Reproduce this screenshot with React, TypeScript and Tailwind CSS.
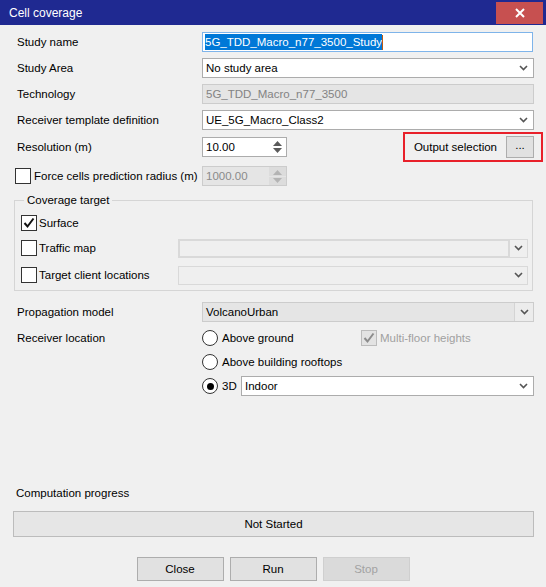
import type { ReactNode } from 'react';

function Chevron({ color = '#555555' }: { color?: string }) {
  return (
    <svg width="9" height="6" viewBox="0 0 9 6">
      <path d="M1 1 L4.5 4.5 L8 1" fill="none" stroke={color} strokeWidth="1.6" />
    </svg>
  );
}

function Check({ color = '#111111' }: { color?: string }) {
  return (
    <svg width="14" height="14" viewBox="0 0 14 14">
      <path d="M2.5 7 L5.5 10.5 L11.5 2.5" fill="none" stroke={color} strokeWidth="2" />
    </svg>
  );
}

function Checkbox({ checked = false, disabled = false }: { checked?: boolean; disabled?: boolean }) {
  return (
    <div
      className={`w-[16px] h-[16px] shrink-0 border flex items-center justify-center ${
        disabled ? 'border-[#bcbcbc] bg-[#e3e3e3]' : 'border-[#333333] bg-white'
      }`}
    >
      {checked && <Check color={disabled ? '#8c8c8c' : '#111111'} />}
    </div>
  );
}

function Radio({ checked = false }: { checked?: boolean }) {
  return (
    <div className="w-[16px] h-[16px] shrink-0 rounded-full border border-[#333333] bg-white flex items-center justify-center">
      {checked && <div className="w-[7px] h-[7px] rounded-full bg-black" />}
    </div>
  );
}

function Combo({ value = '', disabled = false, split = false }: { value?: string; disabled?: boolean; split?: boolean }) {
  if (disabled) {
    return (
      <div className="flex-1 h-[20px] flex border border-[#cccccc] bg-[#e5e5e5]">
        <div className="flex-1 flex items-center pl-[3px] text-black">{value}</div>
        {split ? (
          <div className="w-[19px] border-l border-[#d4d4d4] flex items-center justify-center bg-[#ececec]">
            <Chevron />
          </div>
        ) : (
          <div className="w-[19px] flex items-center justify-center">
            <Chevron />
          </div>
        )}
      </div>
    );
  }
  return (
    <div className="flex-1 h-[20px] flex items-center border border-[#acacac] bg-white">
      <div className="flex-1 pl-[3px]">{value}</div>
      <div className="w-[19px] flex items-center justify-center">
        <Chevron />
      </div>
    </div>
  );
}

function EmptyCombo({ thick = false }: { thick?: boolean }) {
  return (
    <div className="w-[350px] h-[19px] flex border border-[#d9d9d9] bg-[#efefef]">
      <div className={`flex-1 ${thick ? 'border-2 border-[#d9d9d9] -m-px' : ''}`} />
      <div className={`w-[18px] flex items-center justify-center ${thick ? 'border-l border-[#d9d9d9]' : ''}`}>
        <Chevron />
      </div>
    </div>
  );
}

function Spin({ value, disabled = false }: { value: string; disabled?: boolean }) {
  const arrow = disabled ? '#b4b4b4' : '#5a5a5a';
  return (
    <div
      className={`w-[85px] h-[20px] flex border ${
        disabled ? 'border-[#cccccc] bg-[#e5e5e5] text-[#8a8a8a]' : 'border-[#acacac] bg-white text-black'
      }`}
    >
      <div className="flex-1 flex items-center pl-[3px]">{value}</div>
      <div className={`w-[17px] flex flex-col ${disabled ? 'gap-px bg-[#e5e5e5]' : ''}`}>
        <div className={`flex-1 flex items-end justify-center pb-[1px] ${disabled ? 'bg-[#dcdcdc]' : ''}`}>
          <svg width="9" height="5" viewBox="0 0 9 5">
            <path d="M0 5 L4.5 0 L9 5 Z" fill={arrow} />
          </svg>
        </div>
        <div className={`flex-1 flex items-start justify-center pt-[1px] ${disabled ? 'bg-[#dcdcdc]' : ''}`}>
          <svg width="9" height="5" viewBox="0 0 9 5">
            <path d="M0 0 L4.5 5 L9 0 Z" fill={arrow} />
          </svg>
        </div>
      </div>
    </div>
  );
}

function Row({ label, children }: { label: string; children: ReactNode }) {
  return (
    <div className="flex items-center h-[20px]">
      <div className="w-[185px] shrink-0">{label}</div>
      {children}
    </div>
  );
}

function Button({ label, disabled = false }: { label: string; disabled?: boolean }) {
  return (
    <div
      className={`w-[87px] h-[24px] flex items-center justify-center border ${
        disabled ? 'border-[#cfcfcf] bg-[#dadada] text-[#a2a2a2]' : 'border-[#adadad] bg-[#e1e1e1] text-black'
      }`}
    >
      {label}
    </div>
  );
}

export default function App() {
  return (
    <div className="w-[546px] h-[587px] bg-[#f0f0f0] flex flex-col text-[11.5px] leading-[16px] text-black font-['Liberation_Sans',Arial,sans-serif] overflow-hidden">
      {/* title bar */}
      <div className="h-[25px] shrink-0 bg-[#1f2991] flex items-start justify-between pr-[3px]">
        <div className="pl-[9px] pt-[5px] text-white text-[12px]">Cell coverage</div>
        <div className="mt-[2px] w-[47px] h-[22px] bg-[#c75050] flex items-center justify-center">
          <svg width="10" height="10" viewBox="0 0 10 10">
            <path d="M1 1 L9 9 M9 1 L1 9" stroke="white" strokeWidth="2" />
          </svg>
        </div>
      </div>

      <div className="flex flex-col pl-[17px] pr-[12px]">
        <div className="mt-[7px] flex flex-col gap-[6px]">
          <Row label="Study name">
            <div className="flex-1 h-[20px] mr-px flex items-center border border-[#7eb4ea] bg-white pl-[2px]">
              <span className="bg-[#0078d7] text-white leading-[16px]">5G_TDD_Macro_n77_3500_Study</span>
              <span className="w-px h-[15px] bg-[#c05a10]" />
            </div>
          </Row>
          <Row label="Study Area">
            <Combo value="No study area" />
          </Row>
          <Row label="Technology">
            <div className="flex-1 h-[20px] flex items-center border border-[#cccccc] bg-[#e5e5e5] pl-[3px] text-[#838383]">
              5G_TDD_Macro_n77_3500
            </div>
          </Row>
          <Row label="Receiver template definition">
            <Combo value="UE_5G_Macro_Class2" />
          </Row>
        </div>

        <div className="relative mt-[2px] h-[30px] flex items-center">
          <div className="w-[185px] shrink-0">Resolution (m)</div>
          <Spin value="10.00" />
          <div className="ml-auto flex items-center">
            <span>Output selection</span>
            <div className="ml-[9px] w-[28px] h-[22px] border border-[#adadad] bg-[#e1e1e1] flex items-center justify-center pb-[4px]">
              ...
            </div>
          </div>
          <div className="absolute right-[-9px] top-0 w-[140px] h-[30px] border-2 border-[#e8202a]" />
        </div>

        <div className="mt-[4px] h-[20px] flex items-center -ml-[2px]">
          <div className="w-[187px] shrink-0 flex items-center gap-[3px]">
            <Checkbox />
            <span>Force cells prediction radius (m)</span>
          </div>
          <Spin value="1000.00" disabled />
        </div>

        <fieldset className="mt-[6px] -ml-[3px] mr-px border border-[#d5d5d5] pl-[6px] pr-[4px] pb-[5px]">
          <legend className="ml-[3px] px-[3px]">Coverage target</legend>
          <div className="mt-[5px] h-[20px] flex items-center gap-[2px]">
            <Checkbox checked />
            <span>Surface</span>
          </div>
          <div className="mt-[5px] h-[20px] flex items-center">
            <div className="w-[157px] shrink-0 flex items-center gap-[2px]">
              <Checkbox />
              <span>Traffic map</span>
            </div>
            <EmptyCombo thick />
          </div>
          <div className="mt-[7px] h-[20px] flex items-center">
            <div className="w-[157px] shrink-0 flex items-center gap-[2px]">
              <Checkbox />
              <span>Target client locations</span>
            </div>
            <EmptyCombo />
          </div>
        </fieldset>

        <div className="mt-[11px]">
          <Row label="Propagation model">
            <Combo value="VolcanoUrban" disabled split />
          </Row>
        </div>

        <div className="mt-[6px] flex">
          <div className="w-[185px] shrink-0 h-[20px] flex items-center">Receiver location</div>
          <div className="flex-1 flex flex-col gap-[4px]">
            <div className="h-[20px] flex items-center">
              <div className="w-[159px] flex items-center gap-[4px]">
                <Radio />
                <span>Above ground</span>
              </div>
              <div className="flex items-center gap-[3px] text-[#a0a0a0]">
                <Checkbox checked disabled />
                <span>Multi-floor heights</span>
              </div>
            </div>
            <div className="h-[20px] flex items-center gap-[4px]">
              <Radio />
              <span>Above building rooftops</span>
            </div>
            <div className="h-[20px] flex items-center">
              <Radio checked />
              <span className="ml-[4px] w-[19px]">3D</span>
              <Combo value="Indoor" />
            </div>
          </div>
        </div>

        <div className="mt-[89px] -ml-px">Computation progress</div>
        <div className="mt-[10px] -ml-[4px] h-[26px] border border-[#bcbcbc] bg-[#e6e6e6] flex items-center justify-center">
          Not Started
        </div>
      </div>

      <div className="mt-[20px] flex justify-center gap-[6px]">
        <Button label="Close" />
        <Button label="Run" />
        <Button label="Stop" disabled />
      </div>
    </div>
  );
}
